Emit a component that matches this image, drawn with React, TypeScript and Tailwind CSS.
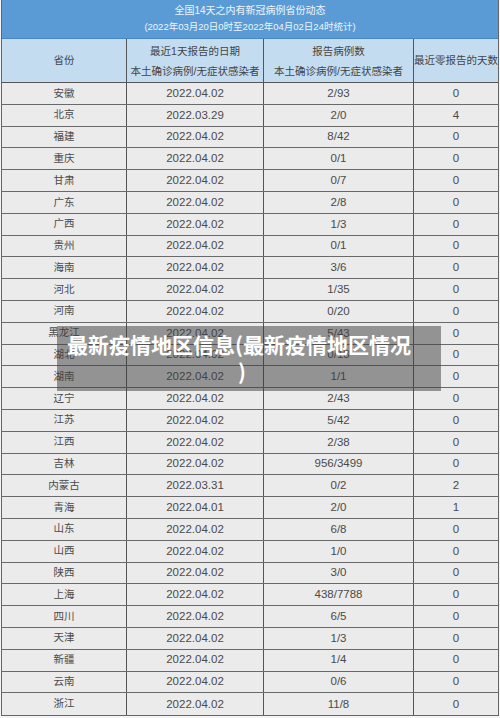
import React from "react";

const rows: [string, string, string, string][] = [
  ["安徽", "2022.04.02", "2/93", "0"],
  ["北京", "2022.03.29", "2/0", "4"],
  ["福建", "2022.04.02", "8/42", "0"],
  ["重庆", "2022.04.02", "0/1", "0"],
  ["甘肃", "2022.04.02", "0/7", "0"],
  ["广东", "2022.04.02", "2/8", "0"],
  ["广西", "2022.04.02", "1/3", "0"],
  ["贵州", "2022.04.02", "0/1", "0"],
  ["海南", "2022.04.02", "3/6", "0"],
  ["河北", "2022.04.02", "1/35", "0"],
  ["河南", "2022.04.02", "0/20", "0"],
  ["黑龙江", "2022.04.02", "5/43", "0"],
  ["湖北", "2022.04.02", "0/18", "0"],
  ["湖南", "2022.04.02", "1/1", "0"],
  ["辽宁", "2022.04.02", "2/43", "0"],
  ["江苏", "2022.04.02", "5/42", "0"],
  ["江西", "2022.04.02", "2/38", "0"],
  ["吉林", "2022.04.02", "956/3499", "0"],
  ["内蒙古", "2022.03.31", "0/2", "2"],
  ["青海", "2022.04.01", "2/0", "1"],
  ["山东", "2022.04.02", "6/8", "0"],
  ["山西", "2022.04.02", "1/0", "0"],
  ["陕西", "2022.04.02", "3/0", "0"],
  ["上海", "2022.04.02", "438/7788", "0"],
  ["四川", "2022.04.02", "6/5", "0"],
  ["天津", "2022.04.02", "1/3", "0"],
  ["新疆", "2022.04.02", "1/4", "0"],
  ["云南", "2022.04.02", "0/6", "0"],
  ["浙江", "2022.04.02", "11/8", "0"],
];

const font = { fontFamily: '"Liberation Sans", "Noto Sans CJK SC", sans-serif' };

export default function App() {
  return (
    <div className="relative w-[500px] h-[718px] bg-[#f4f4f4] overflow-hidden" style={font}>
      <div className="ml-[1px] w-[498px] border-l border-r border-b border-[#666]">
        <div className="h-[39px] bg-[#5b9bd5] flex flex-col items-center justify-center text-[#eef5fc] text-[10px] leading-[16px] border-b border-[#4a86bf]">
          <div>全国14天之内有新冠病例省份动态</div>
          <div className="text-[9.5px]">(2022年03月20日0时至2022年04月02日24时统计)</div>
        </div>
        <div className="h-[44px] bg-[#c4dcf0] grid grid-cols-[125px_137px_150px_1fr] text-[#444] text-[10.5px] border-b border-[#555]">
          <div className="flex items-center justify-center border-r border-[#555]">省份</div>
          <div className="flex flex-col items-center justify-center leading-[20px] border-r border-[#555]">
            <div>最近1天报告的日期</div>
            <div>本土确诊病例/无症状感染者</div>
          </div>
          <div className="flex flex-col items-center justify-center leading-[20px] border-r border-[#555]">
            <div>报告病例数</div>
            <div>本土确诊病例/无症状感染者</div>
          </div>
          <div className="flex items-center justify-center">最近零报告的天数</div>
        </div>
        {rows.map((r, i) => (
          <div
            key={r[0]}
            className={
              "h-[21.8px] bg-[#ebebeb] grid grid-cols-[125px_137px_150px_1fr] text-[#4a4a4a] text-[11.5px] " +
              (i < rows.length - 1 ? "border-b border-[#6a6a6a]" : "")
            }
          >
            <div className="flex items-center justify-center border-r border-[#555] text-[10.5px]">{r[0]}</div>
            <div className="flex items-center justify-center border-r border-[#555]">{r[1]}</div>
            <div className="flex items-center justify-center border-r border-[#555]">{r[2]}</div>
            <div className="flex items-center justify-center">{r[3]}</div>
          </div>
        ))}
      </div>
      <div
        className="absolute left-[57px] top-[326px] w-[384px] h-[65px] bg-[rgba(60,60,60,0.5)] pt-[5px] pl-[10px] text-white font-bold text-[21px] leading-[27px]"
        style={{ fontFamily: '"Noto Sans CJK SC", "Liberation Sans", sans-serif' }}
      >
        <div className="whitespace-nowrap">最新疫情地区信息(最新疫情地区情况</div>
        <div className="w-[350px] text-center">)</div>
      </div>
    </div>
  );
}
